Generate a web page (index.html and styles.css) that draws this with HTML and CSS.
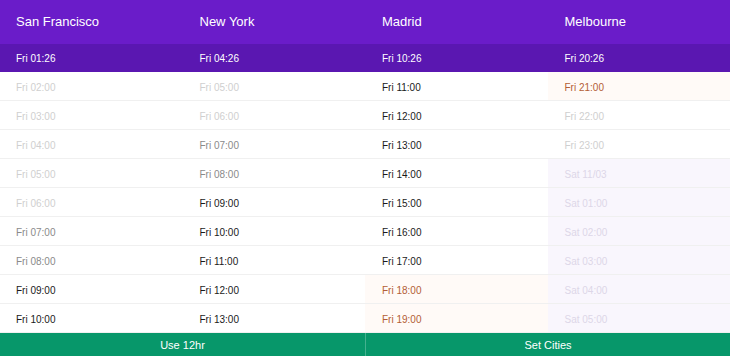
FILE: index.html
```html
<!DOCTYPE html>
<html>
<head>
<meta charset="utf-8">
<link rel="stylesheet" href="styles.css">
</head>
<body>
<div class="app">
  <div class="row head">
    <div class="cell">San Francisco</div>
    <div class="cell">New York</div>
    <div class="cell">Madrid</div>
    <div class="cell">Melbourne</div>
  </div>
  <div class="row now">
    <div class="cell">Fri 01:26</div>
    <div class="cell">Fri 04:26</div>
    <div class="cell">Fri 10:26</div>
    <div class="cell">Fri 20:26</div>
  </div>
  <div class="row">
    <div class="cell night">Fri 02:00</div>
    <div class="cell night">Fri 05:00</div>
    <div class="cell work">Fri 11:00</div>
    <div class="cell eve">Fri 21:00</div>
  </div>
  <div class="row">
    <div class="cell night">Fri 03:00</div>
    <div class="cell night">Fri 06:00</div>
    <div class="cell work">Fri 12:00</div>
    <div class="cell night">Fri 22:00</div>
  </div>
  <div class="row">
    <div class="cell night">Fri 04:00</div>
    <div class="cell early">Fri 07:00</div>
    <div class="cell work">Fri 13:00</div>
    <div class="cell night">Fri 23:00</div>
  </div>
  <div class="row">
    <div class="cell night">Fri 05:00</div>
    <div class="cell early">Fri 08:00</div>
    <div class="cell work">Fri 14:00</div>
    <div class="cell next">Sat 11/03</div>
  </div>
  <div class="row">
    <div class="cell night">Fri 06:00</div>
    <div class="cell work">Fri 09:00</div>
    <div class="cell work">Fri 15:00</div>
    <div class="cell next">Sat 01:00</div>
  </div>
  <div class="row">
    <div class="cell early">Fri 07:00</div>
    <div class="cell work">Fri 10:00</div>
    <div class="cell work">Fri 16:00</div>
    <div class="cell next">Sat 02:00</div>
  </div>
  <div class="row">
    <div class="cell early">Fri 08:00</div>
    <div class="cell work">Fri 11:00</div>
    <div class="cell work">Fri 17:00</div>
    <div class="cell next">Sat 03:00</div>
  </div>
  <div class="row">
    <div class="cell work">Fri 09:00</div>
    <div class="cell work">Fri 12:00</div>
    <div class="cell eve">Fri 18:00</div>
    <div class="cell next">Sat 04:00</div>
  </div>
  <div class="row">
    <div class="cell work">Fri 10:00</div>
    <div class="cell work">Fri 13:00</div>
    <div class="cell eve">Fri 19:00</div>
    <div class="cell next">Sat 05:00</div>
  </div>
  <div class="footer">
    <div class="btn">Use 12hr</div>
    <div class="btn">Set Cities</div>
  </div>
</div>
</body>
</html>
```
FILE: styles.css
```css
html, body {
  margin: 0;
  padding: 0;
  background: #fff;
  overflow: hidden;
}
.app {
  width: 730px;
  height: 356px;
  display: flex;
  flex-direction: column;
  font-family: "Liberation Sans", Arial, sans-serif;
}
.row {
  display: grid;
  grid-template-columns: repeat(4, 1fr);
  height: 29px;
  box-sizing: border-box;
  border-bottom: 1px solid #f0f0f0;
  font-size: 10px;
}
.cell {
  display: flex;
  align-items: center;
  padding-left: 16px;
  padding-top: 2px;
}
.cell + .cell {
  padding-left: 17px;
}
.head {
  height: 44px;
  background: #6a1cc9;
  color: #fff;
  font-size: 13px;
  border-bottom: none;
}
.head .cell {
  padding-top: 0;
  padding-bottom: 2px;
}
.now {
  height: 28px;
  background: #5a17b1;
  color: #fff;
  border-bottom: none;
}
.now .cell {
  padding-top: 1px;
}
.night { color: #cfcfcf; }
.early { color: #8a8a8a; }
.work { color: #1a1a1a; }
.eve { color: #b35e36; background: #fffaf7; }
.next { color: #ddd6e8; background: #f9f6fd; }
.footer {
  display: grid;
  grid-template-columns: 1fr 1fr;
  height: 23px;
  background: #07976a;
  color: #fff;
  font-size: 11px;
}
.btn {
  display: flex;
  align-items: center;
  justify-content: center;
}
.btn + .btn {
  border-left: 1px solid rgba(255, 255, 255, 0.25);
}
```
